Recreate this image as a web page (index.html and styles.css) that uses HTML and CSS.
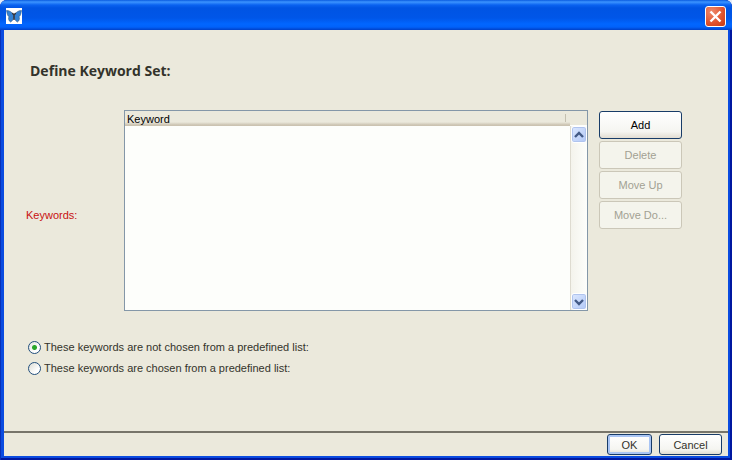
FILE: index.html
```html
<!DOCTYPE html>
<html lang="en">
<head>
<meta charset="utf-8">
<title>Define Keyword Set</title>
<link rel="stylesheet" href="styles.css">
</head>
<body>
<div class="window">
  <header class="titlebar">
    <svg class="logo" viewBox="0 0 16 16" aria-hidden="true">
      <rect width="16" height="16" fill="#fff"/>
      <path d="M7.500 7C6 4 3.500 2.500.5 2.500 1 5.500 1.500 7.800 3 8.800 2 10.500 2.800 13 4.500 14 6 13.500 7.200 11.500 7.800 9.500Z" fill="#3482d4" stroke="#2c5480" stroke-width=".6"/>
      <path d="M8.500 7C10 4 12.500 2.500 15.500 2.500 15 5.500 14.500 7.800 13 8.800 14 10.500 13.200 13 11.500 14 10 13.500 8.800 11.500 8.200 9.500Z" fill="#3482d4" stroke="#2c5480" stroke-width=".6"/>
      <path d="M6.300 5 8 7 9.700 5M8 6v6" fill="none" stroke="#34343c" stroke-width="1.400"/>
    </svg>
    <button class="close" type="button" aria-label="Close">
      <svg viewBox="0 0 19 19" aria-hidden="true"><path d="M4.500 4.500 14.500 14.500M14.500 4.500 4.500 14.500" stroke="#fff" stroke-width="2.400"/></svg>
    </button>
  </header>
  <form class="dialog">
    <main class="content">
      <h1>Define Keyword Set:</h1>
      <div class="keywords">
        <span class="label" id="keywords-label">Keywords:</span>
        <div class="list">
          <table class="table" aria-labelledby="keywords-label">
            <thead><tr><th scope="col">Keyword</th></tr></thead>
          </table>
          <div class="scrollbar">
            <button type="button" aria-label="Scroll up"><svg viewBox="0 0 14 14" aria-hidden="true"><path d="M3 9 7 5 11 9"/></svg></button>
            <button type="button" aria-label="Scroll down"><svg viewBox="0 0 14 14" aria-hidden="true"><path d="M3 5 7 9 11 5"/></svg></button>
          </div>
        </div>
        <div class="actions">
          <button class="button" type="button">Add</button>
          <button class="button" type="button" disabled>Delete</button>
          <button class="button" type="button" disabled>Move Up</button>
          <button class="button" type="button" disabled>Move Do...</button>
        </div>
      </div>
      <div class="choices">
        <label><input type="radio" name="source" checked>These keywords are not chosen from a predefined list:</label>
        <label><input type="radio" name="source">These keywords are chosen from a predefined list:</label>
      </div>
    </main>
    <footer class="footer">
      <button class="button default" type="button">OK</button>
      <button class="button" type="button">Cancel</button>
    </footer>
  </form>
</div>
</body>
</html>
```
FILE: styles.css
```css
* {
  box-sizing: border-box;
}

body {
  margin: 0;
  background: #e4ecf8;
  color: #33332b;
  font: 11px/14px "Liberation Sans", Arial, sans-serif;
}

button {
  margin: 0;
  padding: 0;
  font: inherit;
}

svg {
  display: block;
}

.window {
  display: flex;
  flex-direction: column;
  min-height: 100vh;
  padding: 0 4px 4px;
  border-radius: 7px 7px 0 0;
  background: #0a4be0;
  box-shadow: inset 1px 0 #0830b8, inset -2px 0 #0018a0, inset 0 -2px #0018a0;
}

.titlebar {
  display: flex;
  align-items: center;
  justify-content: space-between;
  height: 30px;
  margin: 0 -4px;
  padding: 2px 6px 0;
  border-radius: 7px 7px 0 0;
  background: linear-gradient(#0a5be0 0, #3c94ff 2px, #0a62f0 5px, #0054e3 8px, #0056e8 18px, #0166ff 24px, #0162fa 27px, #0040c8 30px);
}

.logo {
  width: 16px;
  height: 16px;
}

.close {
  width: 21px;
  height: 21px;
  border: 1px solid #fff;
  border-radius: 3px;
  background: radial-gradient(circle at 30% 25%, #ee8a6c, #e0512c 60%, #c43a14);
}

.dialog {
  display: flex;
  flex: 1;
  flex-direction: column;
  background: #ebe9dc;
}

.content {
  flex: 1;
  padding: 32px 46px 0 22px;
}

h1 {
  margin: 0 0 30px 4px;
  font: bold 14px/18px "Open Sans", Verdana, sans-serif;
}

.keywords {
  display: grid;
  grid-template-columns: 98px 1fr 83px;
}

.label {
  align-self: center;
  padding-top: 8px;
  color: #c81010;
}

.list {
  display: grid;
  grid-template-columns: 1fr 17px;
  height: 201px;
  margin-right: 11px;
  border: 1px solid #8497a8;
  background: linear-gradient(#ebe9dc 14px, #fdfefb 14px);
}

.table {
  align-self: start;
  width: 100%;
  border-collapse: collapse;
}

th {
  height: 15px;
  padding: 2px 2px 0;
  background: linear-gradient(#c4c0b0, #c4c0b0) right 4px top 3px / 1px 8px no-repeat, linear-gradient(transparent 11px, #cbc3b1 14px);
  color: #000;
  font-weight: normal;
  line-height: 13px;
  text-align: left;
}

.scrollbar {
  display: flex;
  flex-direction: column;
  justify-content: space-between;
  margin-top: 15px;
  border-left: 1px solid #dedbd0;
  background: linear-gradient(90deg, #f4f3ec, #fdfefb);
}

.scrollbar button {
  width: 16px;
  height: 17px;
  border: 1px solid #fff;
  border-radius: 3px;
  background: linear-gradient(135deg, #dce8ff, #b2c8f6);
  box-shadow: inset 0 0 0 1px #b0c4ee;
}

.scrollbar path {
  fill: none;
  stroke: #435a86;
  stroke-width: 2.4;
}

.actions {
  display: flex;
  flex-direction: column;
  gap: 2px;
  padding-top: 1px;
}

.button {
  height: 28px;
  border: 1px solid #183c68;
  border-radius: 3px;
  background: linear-gradient(#fff, #f5f5f1 75%, #e2ddd2);
  color: #000;
}

.button:disabled {
  border-color: #cbc7b8;
  background: #f4f4ec;
  color: #a2a193;
}

.choices {
  display: flex;
  flex-direction: column;
  gap: 5px;
  padding-top: 28px;
}

.choices label {
  display: flex;
  align-items: center;
  gap: 3px;
  height: 16px;
}

.choices input {
  width: 13px;
  height: 13px;
  margin: 0 0 0 2px;
  appearance: none;
  border: 1px solid #214e7c;
  border-radius: 50%;
  background: linear-gradient(135deg, #dcdcd4, #fff 70%);
}

.choices input:checked {
  background: radial-gradient(circle, #2aa62a 2px, transparent 3px), linear-gradient(135deg, #e4e4de, #fff 70%);
}

.footer {
  display: flex;
  justify-content: flex-end;
  gap: 7px;
  padding: 1px 6px;
  border-top: 2px solid #77756a;
}

.footer .button {
  width: 63px;
  height: 21px;
  color: #33332b;
}

.footer .default {
  width: 45px;
  box-shadow: inset 0 0 0 2px #a9c5f4;
}
```
